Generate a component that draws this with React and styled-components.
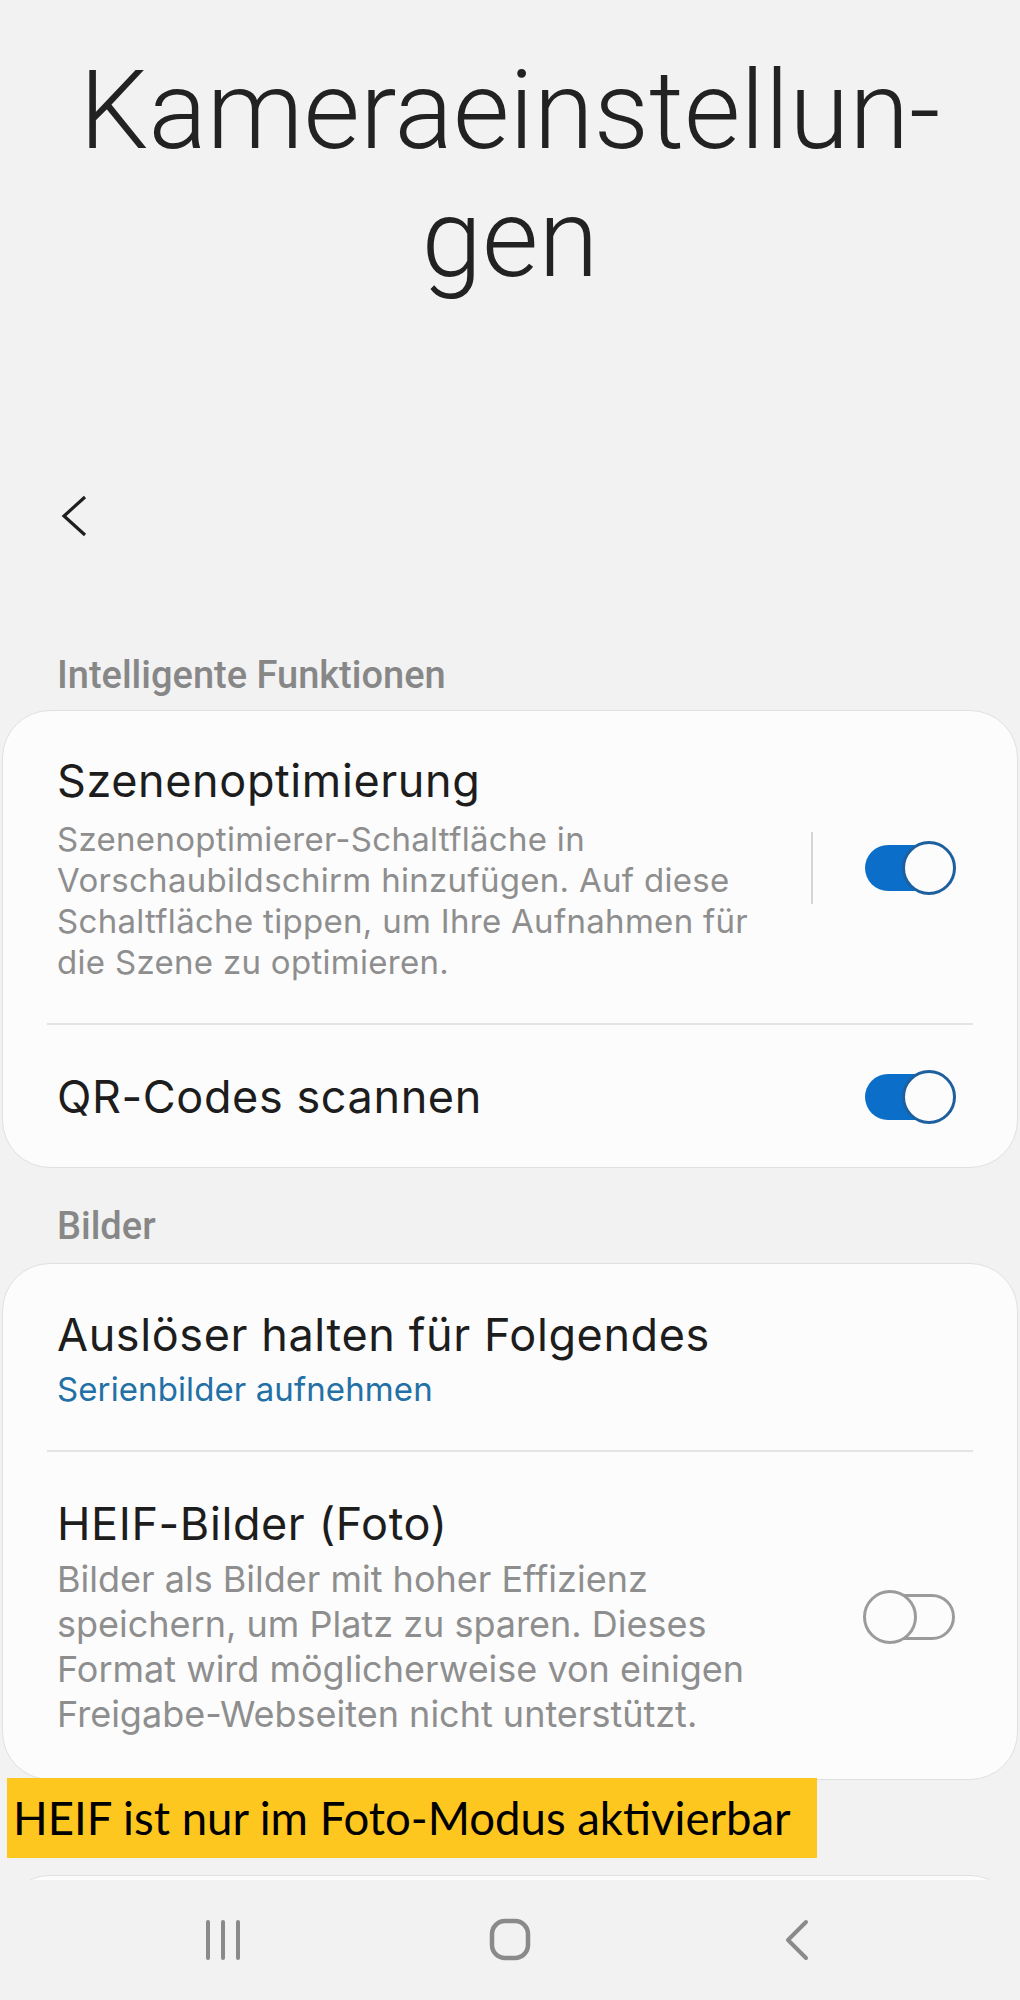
import styled, { createGlobalStyle } from "styled-components";

const GlobalStyle = createGlobalStyle`
  html, body {
    margin: 0;
    padding: 0;
    background: #f2f2f2;
  }
  body {
    font-family: Inter, "Open Sans", Roboto, sans-serif;
  }
`;

const Screen = styled.div`
  width: 1020px;
  height: 2000px;
  display: flex;
  flex-direction: column;
  background: #f2f2f2;
  overflow: hidden;
`;

const Scroll = styled.div`
  flex: 1;
  overflow: hidden;
`;

const TitleArea = styled.div`
  height: 456px;
  box-sizing: border-box;
  padding-top: 47px;
  text-align: center;
`;

const BigTitle = styled.h1`
  margin: 0;
  font-family: Roboto, sans-serif;
  font-weight: 300;
  font-size: 109px;
  line-height: 128px;
  color: #222;
`;

const Toolbar = styled.div`
  height: 120px;
  display: flex;
  align-items: center;
  padding-left: 61px;
`;

const SectionHeader = styled.div`
  padding: ${(p) => p.$top}px 57px ${(p) => p.$bottom}px;
  font-family: Roboto, sans-serif;
  font-weight: 500;
  font-size: 38px;
  line-height: 44px;
  color: #878787;
`;

const Card = styled.div`
  margin: ${(p) => p.$mt || 0}px 2px 0;
  background: #fcfcfc;
  border: 1px solid #e0e0e0;
  border-radius: 48px;
  overflow: hidden;
  min-height: ${(p) => p.$min || 0}px;
`;

const Row = styled.div`
  display: flex;
  align-items: center;
  box-sizing: border-box;
  min-height: ${(p) => p.$min}px;
  padding: 2px 61px 0 54px;
`;

const TextCol = styled.div`
  flex: 1;
  min-width: 0;
`;

const ItemTitle = styled.div`
  font-size: 45px;
  line-height: 56px;
  letter-spacing: 0.6px;
  color: #1d1d1d;
  white-space: nowrap;
`;

const ItemDesc = styled.div`
  margin-top: ${(p) => p.$mt}px;
  font-size: ${(p) => p.$size}px;
  line-height: ${(p) => p.$lh}px;
  letter-spacing: ${(p) => p.$ls}px;
  color: #8e8e8e;
  white-space: nowrap;
`;

const ItemValue = styled.div`
  margin-top: 6px;
  font-size: 33px;
  line-height: 41px;
  letter-spacing: 0.1px;
  color: #2270a6;
`;

const Divider = styled.div`
  height: 2px;
  margin: 0 44px;
  background: #e4e4e4;
`;

const VDivider = styled.div`
  width: 2px;
  height: 72px;
  background: #d6d6d6;
  margin-right: 50px;
  flex-shrink: 0;
`;

const Switch = styled.div`
  position: relative;
  width: 93px;
  height: 54px;
  flex-shrink: 0;
`;

const Track = styled.div`
  position: absolute;
  left: 2px;
  right: 1px;
  top: 4px;
  bottom: 4px;
  box-sizing: border-box;
  border-radius: 24px;
  background: ${(p) => (p.$on ? "#0b6fca" : "transparent")};
  border: ${(p) => (p.$on ? "none" : "3px solid #9b9b9b")};
`;

const Thumb = styled.div`
  position: absolute;
  top: 0;
  ${(p) => (p.$on ? "right: 0;" : "left: 0;")}
  width: 54px;
  height: 54px;
  box-sizing: border-box;
  border-radius: 50%;
  background: #fcfcfc;
  border: 3px solid ${(p) => (p.$on ? "#1d5f9f" : "#9b9b9b")};
`;

const Banner = styled.div`
  margin: -2px 0 0 7px;
  width: 810px;
  height: 80px;
  box-sizing: border-box;
  padding-left: 6px;
  background: #fdc71f;
  font-family: Lato, sans-serif;
  font-size: 45.5px;
  line-height: 80px;
  color: #000;
  white-space: nowrap;
`;

const NavBar = styled.div`
  height: 120px;
  flex-shrink: 0;
  display: flex;
  justify-content: center;
  align-items: center;
  background: #f2f2f2;
`;

const NavItem = styled.div`
  width: 287px;
  display: flex;
  justify-content: center;
  align-items: center;
`;

function Toggle({ on }) {
  return (
    <Switch>
      <Track $on={on} />
      <Thumb $on={on} />
    </Switch>
  );
}

export default function App() {
  return (
    <>
      <GlobalStyle />
      <Screen>
        <Scroll>
          <TitleArea>
            <BigTitle>
              Kameraeinstellun-
              <br />
              gen
            </BigTitle>
          </TitleArea>

          <Toolbar>
            <svg width="28" height="42" viewBox="0 0 28 42">
              <polyline
                points="24,2 3,21 24,40"
                fill="none"
                stroke="#1f1f1f"
                strokeWidth="3.2"
                strokeLinejoin="miter"
              />
            </svg>
          </Toolbar>

          <SectionHeader $top={77} $bottom={13}>
            Intelligente Funktionen
          </SectionHeader>
          <Card>
            <Row $min={312}>
              <TextCol>
                <ItemTitle>Szenenoptimierung</ItemTitle>
                <ItemDesc $mt={10} $lh={41} $size={33} $ls={0.3}>
                  Szenenoptimierer-Schaltfläche in
                  <br />
                  Vorschaubildschirm hinzufügen. Auf diese
                  <br />
                  Schaltfläche tippen, um Ihre Aufnahmen für
                  <br />
                  die Szene zu optimieren.
                </ItemDesc>
              </TextCol>
              <VDivider />
              <Toggle on />
            </Row>
            <Divider />
            <Row $min={142}>
              <TextCol>
                <ItemTitle>QR-Codes scannen</ItemTitle>
              </TextCol>
              <Toggle on />
            </Row>
          </Card>

          <SectionHeader $top={36} $bottom={15}>
            Bilder
          </SectionHeader>
          <Card>
            <Row $min={186}>
              <TextCol>
                <ItemTitle>Auslöser halten für Folgendes</ItemTitle>
                <ItemValue>Serienbilder aufnehmen</ItemValue>
              </TextCol>
            </Row>
            <Divider />
            <Row $min={327}>
              <TextCol>
                <ItemTitle>HEIF-Bilder (Foto)</ItemTitle>
                <ItemDesc $mt={5} $lh={45} $size={36} $ls={0}>
                  Bilder als Bilder mit hoher Effizienz
                  <br />
                  speichern, um Platz zu sparen. Dieses
                  <br />
                  Format wird möglicherweise von einigen
                  <br />
                  Freigabe-Webseiten nicht unterstützt.
                </ItemDesc>
              </TextCol>
              <Toggle />
            </Row>
          </Card>

          <Banner>HEIF ist nur im Foto-Modus aktivierbar</Banner>

          <Card $mt={17} $min={200} />
        </Scroll>

        <NavBar>
          <NavItem>
            <svg width="40" height="42" viewBox="0 0 40 42">
              <g stroke="#8a8a8a" strokeWidth="4" strokeLinecap="round">
                <line x1="5" y1="3" x2="5" y2="39" />
                <line x1="20" y1="3" x2="20" y2="39" />
                <line x1="35" y1="3" x2="35" y2="39" />
              </g>
            </svg>
          </NavItem>
          <NavItem>
            <svg width="44" height="44" viewBox="0 0 44 44">
              <rect
                x="4"
                y="3"
                width="36"
                height="37"
                rx="13"
                fill="none"
                stroke="#8a8a8a"
                strokeWidth="4.5"
              />
            </svg>
          </NavItem>
          <NavItem>
            <svg width="28" height="42" viewBox="0 0 28 42">
              <polyline
                points="23,3 5,21 23,39"
                fill="none"
                stroke="#8a8a8a"
                strokeWidth="4"
                strokeLinecap="round"
                strokeLinejoin="round"
              />
            </svg>
          </NavItem>
        </NavBar>
      </Screen>
    </>
  );
}
